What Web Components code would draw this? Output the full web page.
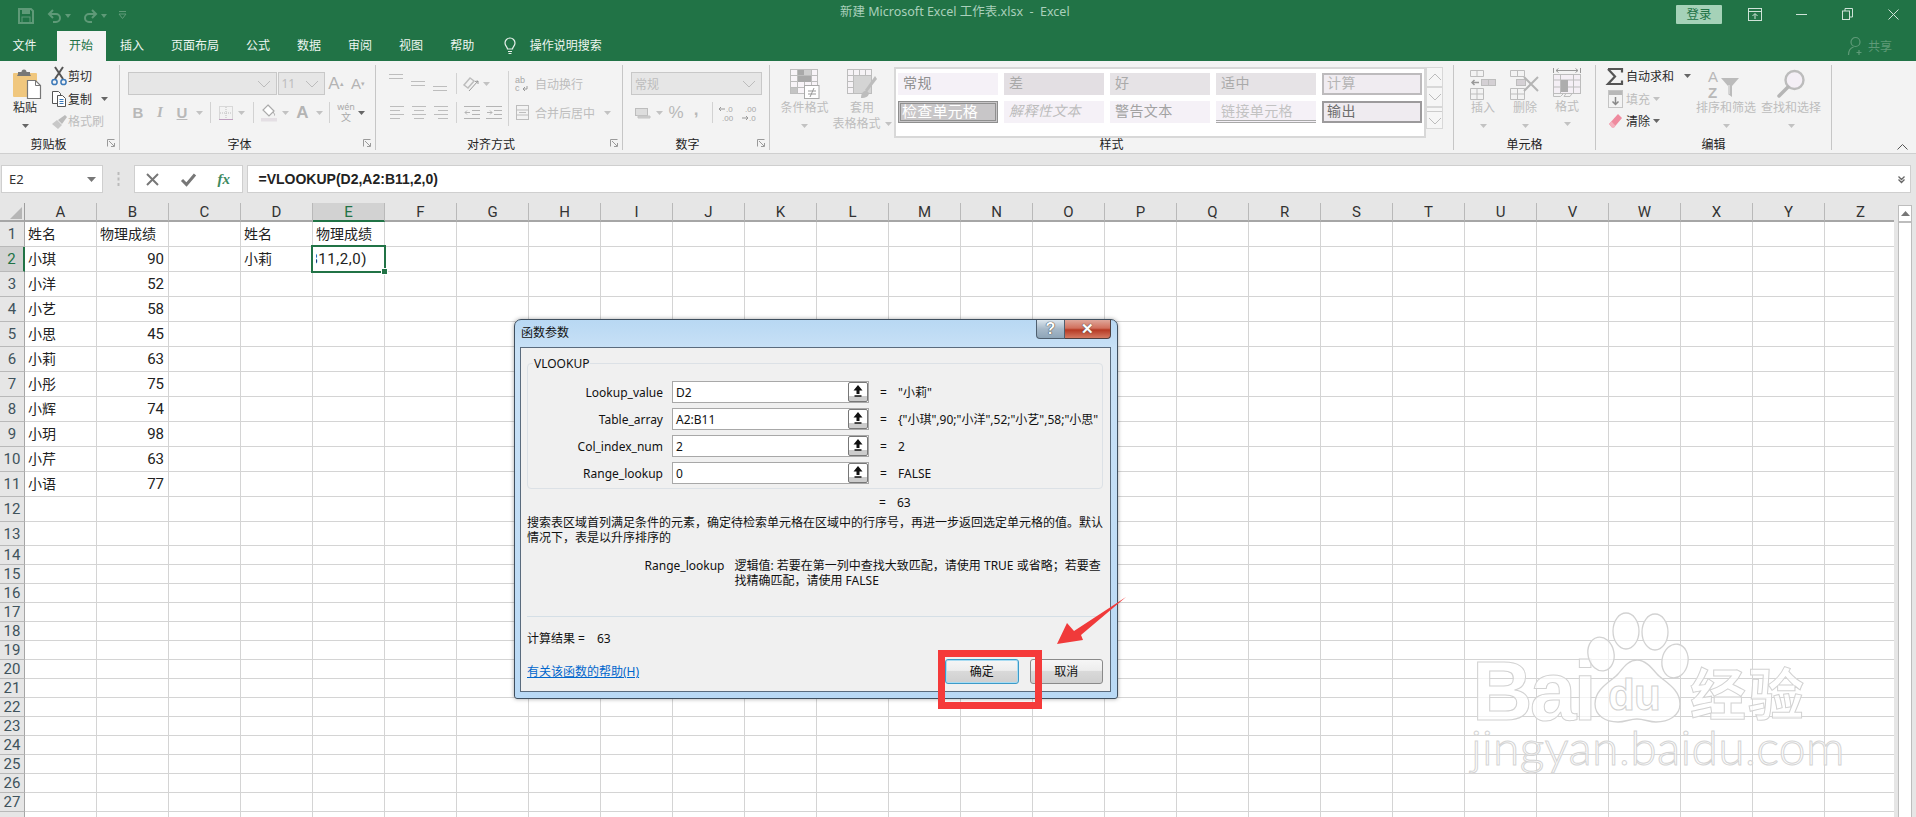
<!DOCTYPE html>
<html lang="zh"><head><meta charset="utf-8"><title>Excel</title>
<style>html,body{margin:0;padding:0;background:#fff;overflow:hidden}</style></head>
<body><xl-app></xl-app>
<script>
const CJK='"Noto Sans CJK SC"';
const UI=`"Noto Sans",${CJK},sans-serif`;
const g='#bdbdbd', d='#6e6e6e', dim='#5f9a78';
const S=(w,h,b,a='')=>`<svg xmlns="http://www.w3.org/2000/svg" width="${w}" height="${h}" viewBox="0 0 ${w} ${h}" fill="none" stroke="${g}" ${a}>${b}</svg>`;
const lines=(arr,x1,x2)=>arr.map(y=>`<path d="M${x1} ${y}H${x2}"/>`).join('');
const ICON={
 paste:S(30,31,`<rect x="1" y="4" width="24" height="24" rx="1" fill="#f0c77e" stroke="none"/><path d="M6 5V3h3.5a2.5 2.5 0 0 1 5 0H18v2l1 2H5z" fill="#777" stroke="none"/><path d="M15.500 11.500h8l5 5v13h-13z" fill="#fff" stroke="#777" stroke-width="1.200"/><path d="M23.500 11.500v5h5" stroke="#777"/>`),
 scissors:S(16,20,`<path d="M4 1l8 12M12 1L4 13" stroke="#555" stroke-width="2"/><circle cx="3.500" cy="16" r="2.600" stroke="#3b78b8" stroke-width="1.500"/><circle cx="12.500" cy="16" r="2.600" stroke="#3b78b8" stroke-width="1.500"/>`),
 copy:S(16,17,`<path d="M1.500 1.500h6l2 2v10h-8z" fill="#fff" stroke="#555"/><path d="M6.500 5.500h5l3 3v8h-8z" fill="#fff" stroke="#555"/><path d="M8.500 9.500h4M8.500 11.500h4M8.500 13.500h4" stroke="#3b78b8"/>`),
 brush:S(17,15,`<path d="M1 10l5-4 5 5-4 4z" fill="#c8c8c8" stroke="none"/><path d="M7 6l7-5 2 2-5 7z" fill="#bbb" stroke="none"/>`),
 caret:S(7,4,`<path d="M0 0h7L3.500 4z" fill="#c2c2c2" stroke="none"/>`),
 dcaret:S(7,4,`<path d="M0 0h7L3.500 4z" fill="#666" stroke="none"/>`),
 chev:S(14,8,`<path d="M1 1l6 6 6-6" stroke="#bcbcbc"/>`),
 alT:S(16,9,lines([.5,4.5],1,15)),
 alL:S(15,13,`<path d="M1 .5H15M1 4.500H11M1 8.500H15M1 12.500H11"/>`),
 alC:S(15,13,`<path d="M1 .5H15M3 4.500H13M1 8.500H15M3 12.500H13"/>`),
 alR:S(15,13,`<path d="M1 .5H15M5 4.500H15M1 8.500H15M5 12.500H15"/>`),
 orient:S(18,18,`<path d="M2 10l6-7 4 3-6 7z" stroke-width="1.500"/><path d="M7 16L16 6" stroke="#999"/><path d="M16 6l-3 .5M16 6v3" stroke="#999"/>`),
 wrap:S(14,16,`<text x="0" y="7" font-family="Liberation Sans" font-size="9" fill="#a8a8a8" stroke="none">ab</text><text x="0" y="15" font-family="Liberation Sans" font-size="9" fill="#a8a8a8" stroke="none">c</text><path d="M12 10v3H8m2-2l-2 2 2 2" stroke="#999"/>`),
 merge:S(13,15,`<rect x=".5" y=".5" width="12" height="14"/><path d="M.5 5H12.500M.5 10H12.500M3 7.500h7"/>`),
 out:S(17,13,`<path d="M1 .5H17M9 4.500H17M9 8.500H17M1 12.500H17M7 6.500H2m2-2l-2 2 2 2" stroke="#b4b4b4"/>`),
 ind:S(17,13,`<path d="M1 .5H17M9 4.500H17M9 8.500H17M1 12.500H17M2 6.500h5m-2-2l2 2-2 2" stroke="#b4b4b4"/>`),
 bord:S(14,14,`<rect x=".5" y=".5" width="13" height="13" stroke-dasharray="1 1"/><path d="M7 1v12M1 7h12" stroke-dasharray="1 1"/><path d="M0 13.500h14" stroke="#c0a0c0"/>`),
 fill:S(16,18,`<path d="M7 1l6 6-5 5-6-6z" fill="#fff" stroke="#aaa" stroke-width="1.200"/><path d="M12 8c1 1.500 2 2.500 1.500 3.500" stroke="#aaa"/><rect x="0" y="14" width="16" height="3.500" fill="#e4dfe4" stroke="none"/>`),
 cur:S(16,15,`<rect x=".5" y="3.500" width="12" height="7" fill="#ddd"/><path d="M3 10v3h12v-2H3z" fill="#cfcfcf" stroke="#c4c4c4"/>`),
 incd:S(18,18,`<text x="8" y="8" font-family="Liberation Sans" font-size="8" fill="#a8a8a8" stroke="none">.0</text><text x="4" y="17" font-family="Liberation Sans" font-size="8" fill="#a8a8a8" stroke="none">.00</text><path d="M7 5H1m2-2L1 5l2 2" stroke="#999"/>`),
 decd:S(18,18,`<text x="5" y="8" font-family="Liberation Sans" font-size="8" fill="#a8a8a8" stroke="none">.00</text><text x="9" y="17" font-family="Liberation Sans" font-size="8" fill="#a8a8a8" stroke="none">.0</text><path d="M2 14h6m-2-2l2 2-2 2" stroke="#999"/>`),
 cond:S(30,30,`<rect x=".5" y=".5" width="27" height="24" fill="#f8f4f8"/><path d="M7.500 .5v24M14.500 .5v24M21.500 .5v24M.5 6.500h27M.5 12.500h27M.5 18.500h27"/><rect x="8" y="1" width="6" height="5" fill="#a9a9a9" stroke="none"/><rect x="8" y="7" width="13" height="6" fill="#a9a9a9" stroke="none"/><rect x="1" y="19" width="6" height="5" fill="#c4c4c4" stroke="none"/><rect x="14" y="1" width="7" height="5" fill="#cfcfcf" stroke="none"/><rect x="14.500" y="16.500" width="14.500" height="13" fill="#fff" stroke="#aaa"/><path d="M18 22h8M18 25h8M24 19l-4 9" stroke="#999"/>`),
 table:S(30,30,`<rect x=".5" y=".5" width="24" height="24" fill="#f6f3f6"/><path d="M6.500 .5v24M12.500 .5v24M18.500 .5v24M.5 6.500h24M.5 12.500h24M.5 18.500h24"/><rect x="7" y="7" width="17" height="17" fill="#d4d4d4" stroke="none"/><path d="M28 7L18 21l2 2L30 10z" fill="#bdbdbd" stroke="none"/><path d="M14 29c0-5 3-8 6-7l2 2c0 3-3 5-8 5z" fill="#bdbdbd" stroke="none"/>`),
 ins:S(26,30,`<path d="M.5 1.500h13v6H.5zM7 1.500v6M.5 19.500h13v11H.5zM7 19.500v11M.5 25h13"/><rect x="11.500" y="10.500" width="14" height="6" fill="#d4d0d4"/><path d="M18.500 10.500v6" /><path d="M9 13.500H2m2.500-2.500L2 13.500 4.500 16" stroke="#9a9a9a" stroke-width="1.500"/>`),
 del:S(30,30,`<path d="M.5 1.500h14v6H.5zM7.500 1.500v6M.5 19.500h14v11H.5zM7.500 19.500v11M.5 25h14"/><rect x="6.500" y="10.500" width="9" height="6" fill="#d4d0d4"/><path d="M14 8l14 14M28 8L14 22" stroke="#b4b4b4" stroke-width="2"/>`),
 fmt:S(28,32,`<path d="M.5 1v5M27.500 1v5M3 3.500h22M3 3.500l2.500-2M3 3.500l2.500 2M25 3.500l-2.500-2M25 3.500l-2.500 2" stroke="#999"/><rect x=".5" y="7.500" width="27" height="19" fill="#f4eff5"/><path d="M7.500 7.500v19M20.500 7.500v19M.5 13h27M.5 20h27"/><rect x="8" y="13" width="7" height="12" fill="#adadad" stroke="none"/><path d="M.5 26.500v3h7l3-3M13 26.500l-2 3h6l2-3"/>`),
 sum:S(17,17,`<path d="M1 1h14v3.500M1 1l7 7.500L1 16h14v-3.500" stroke="#555" stroke-width="2.200"/>`),
 fillb:S(15,18,`<rect x=".5" y=".5" width="14" height="17" fill="#f3f3f3" stroke="#c4c4c4"/><rect x="1" y="1" width="13" height="4" fill="#b8b8b8" stroke="none"/><path d="M7.500 7v7M4.500 11.500l3 3 3-3" stroke="#888" stroke-width="1.500"/>`),
 eraser:S(15,16,`<path d="M10 1l4 4-8 9.500H4L1 11z" fill="#ef8a9e" stroke="none"/><path d="M1 11l3 3.500h2l1.500-1.800L3.500 8.500z" fill="#f4b0bd" stroke="none"/>`),
 sort:S(36,30,`<text x="0" y="13" font-family="Liberation Sans" font-size="15" fill="#b8b8b8" stroke="none">A</text><text x="0" y="29" font-family="Liberation Sans" font-weight="bold" font-size="15" fill="#b8b8b8" stroke="none">Z</text><path d="M13 9h18l-7 8v11l-4-3v-8z" fill="#bbb" stroke="none"/><path d="M21 16v9" stroke="#eee"/>`),
 find:S(30,30,`<circle cx="18.500" cy="11" r="9" fill="#f4eff6" stroke="#bcbcbc" stroke-width="2.400"/><path d="M12 18L3 27" stroke="#b5b5b5" stroke-width="3.500" stroke-linecap="round"/>`),
 launch:S(8,8,`<path d="M.5 7.500V.5h7M2 2l5 5M4 7.500h3.500V4" stroke="#9a9a9a"/>`),
 up:S(11,6,`<path d="M.5 5.500l5-5 5 5" stroke="#555"/>`),
 save:S(16,16,`<path d="M1 1h12l2 2v12H1z" stroke="${dim}" stroke-width="2"/><rect x="4" y="1" width="8" height="5" fill="${dim}" stroke="none"/><rect x="4" y="9" width="8" height="6" stroke="${dim}"/>`),
 undo:S(15,15,`<path d="M3 6h6a4 4 0 0 1 0 8H6" stroke="${dim}" stroke-width="2"/><path d="M6 2L2 6l4 4" stroke="${dim}" stroke-width="2"/>`),
 redo:S(15,15,`<path d="M12 6H6a4 4 0 0 0 0 8h3" stroke="${dim}" stroke-width="2"/><path d="M9 2l4 4-4 4" stroke="${dim}" stroke-width="2"/>`),
 dimc:S(6,4,`<path d="M0 0h6L3 4z" fill="${dim}" stroke="none"/>`),
 custom:S(9,9,`<path d="M1 .5h7M1 3h7L4.500 7.500z" stroke="${dim}"/>`),
 bulb:S(12,18,`<path d="M3.500 12c0-2-2.500-3-2.500-6a5 5 0 0 1 10 0c0 3-2.500 4-2.500 6z" stroke="#e8f1ec" stroke-width="1.200"/><path d="M4 14.500h4M4.500 16.500h3" stroke="#e8f1ec" stroke-width="1.200"/>`),
 mode:S(14,13,`<rect x=".5" y=".5" width="13" height="12" stroke="#cfe3d8"/><path d="M.5 3.500h13M7 11V6M4.500 8L7 5.500 9.500 8" stroke="#cfe3d8"/>`),
 minw:S(11,1,`<path d="M0 .5h11" stroke="#cfe3d8"/>`),
 rest:S(11,12,`<rect x=".5" y="3" width="7" height="8.500" stroke="#cfe3d8"/><path d="M3 3V.5h7.500v8.500H8" stroke="#cfe3d8"/>`),
 closew:S(11,11,`<path d="M.5 .5l10 10M10.500 .5l-10 10" stroke="#cfe3d8"/>`),
 person:S(16,20,`<circle cx="7.500" cy="6" r="4.500" stroke="#5f9a78" stroke-width="1.200"/><path d="M.5 19c0-4 2-7 5-8M11 14v5M8.500 16.500h5" stroke="#5f9a78" stroke-width="1.200"/>`),
 x:S(13,13,`<path d="M1 1l11 11M12 1L1 12" stroke="#777" stroke-width="2"/>`),
 check:S(15,13,`<path d="M1 7l4.500 4.500L14 1.500" stroke="#777" stroke-width="3"/>`),
 dots:S(3,14,`<path d="M1.500 0v3M1.500 5.500v3M1.500 11v3" stroke="#bbb" stroke-width="2"/>`),
 name:S(9,5,`<path d="M0 0h9L4.500 5z" fill="#777" stroke="none"/>`),
 more:S(7,7,`<path d="M.5 .5L3.500 3.500 6.500 .5M.5 3.500L3.500 6.500 6.500 3.500" stroke="#666" stroke-width="1.300"/>`),
 corner:S(12,12,`<path d="M0 12L12 0v12z" fill="#b6b6b6" stroke="none"/>`),
 sup:S(12,13,`<path d="M6 1L1.500 6.500h3V10h3V6.500h3z" fill="#111" stroke="none"/><path d="M2.500 12h7" stroke="#111" stroke-width="1.500"/>`),
 sca:S(9,5,`<path d="M0 5l4.500-5L9 5z" fill="#777" stroke="none"/>`),
 paw:S(90,112,`<g stroke="#d2d2d2" stroke-width="1.300" fill="rgba(255,255,255,.65)"><ellipse cx="8" cy="42" rx="13" ry="17" transform="rotate(-12 8 42)"/><ellipse cx="33" cy="19" rx="13" ry="18"/><ellipse cx="62" cy="20" rx="13" ry="18"/><ellipse cx="82" cy="49" rx="13" ry="17" transform="rotate(10 82 49)"/><path d="M44 48c8 0 14 7 20 14 6 7 23 14 23 30 0 12-12 18-24 18-7 0-12-3-19-3s-12 3-19 3c-12 0-23-6-23-18 0-16 17-23 23-30 6-7 11-14 19-14z"/></g>`,'style="overflow:visible"'),
};
function define(n,css,html,extra){
  const t=document.createElement('template');t.innerHTML=`<style>${css}</style>${html}`;
  customElements.define(n,class extends HTMLElement{constructor(){super();this.attachShadow({mode:'open'}).appendChild(t.content.cloneNode(true));extra&&extra.call(this)}});
}
customElements.define('xl-icon',class extends HTMLElement{connectedCallback(){if(this.shadowRoot)return;this.attachShadow({mode:'open'}).innerHTML=`<style>:host{display:inline-flex;flex:none;line-height:0}svg{overflow:visible;display:block}</style>${ICON[this.getAttribute('n')]||''}`}});
const I=(n,st='')=>`<xl-icon n="${n}" style="${st}"></xl-icon>`;

define('xl-group',`:host{display:flex;flex-direction:column;flex:none;height:85px;border-right:1px solid #c6c6c6;box-sizing:border-box;position:relative}
.c{flex:1;min-height:0;display:flex}.l{height:12px;line-height:12px;text-align:center;font-size:12px;color:#222;transform:translateY(1px)}
.k{position:absolute;right:4px;bottom:-1px}`,`<div class="c"><slot></slot></div><div class="l"></div><div class="k"></div>`);
define('xl-big',`:host{display:flex;flex-direction:column;align-items:center;flex:none;padding-top:4px;box-sizing:border-box;font-size:12px;color:#bdbdbd}
.i{height:31px;display:flex;align-items:flex-start;justify-content:center}.a,.b{height:15.500px;line-height:15.500px;white-space:nowrap;display:flex;align-items:center;gap:4px}`,`<div class="i"><slot name="i"></slot></div><div class="a"><slot name="a"></slot></div><div class="b"><slot name="b"></slot></div>`);

define('xl-title',`:host{display:flex;align-items:center;height:31px;background:#217346;position:relative;font-family:${UI};font-size:12px;flex:none}
.q{display:flex;align-items:center;padding-left:18px;width:150px;box-sizing:border-box}
.t{position:absolute;left:840px;top:4px;height:16px;line-height:16px;color:#a9d0bb;white-space:pre;font-size:12.500px}
.r{margin-left:auto;display:flex;align-items:center;height:22px;align-self:flex-start;margin-top:3px}
.lg{width:46px;height:19px;line-height:19px;border-radius:1px;background:#a5d2b8;color:#217346;text-align:center;font-size:12.500px;margin-right:10px}
.w{width:46px;display:flex;justify-content:center}`,
`<div class="q">${I('save')}<span style="width:13px"></span>${I('undo')}<span style="width:3px"></span>${I('dimc')}<span style="width:12px"></span>${I('redo')}<span style="width:3px"></span>${I('dimc')}<span style="width:11px"></span>${I('custom')}</div>
<div class="t">新建 Microsoft Excel 工作表.xlsx  -  Excel</div>
<div class="r"><div class="lg">登录</div><div class="w">${I('mode')}</div><div class="w">${I('minw')}</div><div class="w">${I('rest')}</div><div class="w">${I('closew')}</div></div>`);

define('xl-tabs',`:host{display:flex;align-items:stretch;height:30px;background:#217346;font-family:${UI};font-size:12px;color:#eef6f1;flex:none}
span{padding:0 12.500px;line-height:29px;white-space:nowrap}.on{background:#f3f3f3;color:#217346}
.gap{display:flex;gap:2px;margin-left:7.500px}.bulb{display:flex;align-items:center;margin:0 0 0 17px}.s{padding:0 0 0 14px;font-size:12px}
.sh{margin-left:auto;display:flex;align-items:center;color:#5f9a78;padding-right:24px}.sh b{font-weight:400;margin-left:4px}`,
`<span>文件</span><div class="gap"><span class="on">开始</span><span>插入</span><span>页面布局</span><span>公式</span><span>数据</span><span>审阅</span><span>视图</span><span>帮助</span></div><div class="bulb">${I('bulb')}</div><span class="s">操作说明搜索</span><div class="sh">${I('person')}<b>共享</b></div>`);

define('xl-gallery',`:host{display:grid;grid-template-columns:repeat(5,100px);grid-template-rows:22px 22px;gap:6px;padding:4px 2px;border:2px solid #d8d8d8;background:#fff;width:524px;flex:none;font-size:14px;letter-spacing:.4px}
div{padding-left:5px;line-height:20px;box-sizing:border-box;white-space:nowrap;color:#a9a9a9;overflow:hidden}
.n{background:#f5f1f7;color:#8f8f8f}.m{background:#e3dfe3;color:#a9a9a9}.h{background:#e6e3e6;color:#aaa}
.c{background:#f0ecf1;border:2px solid #bdbbbd;line-height:16px;padding-left:3px;color:#b5b5b5}
.k{background:#c8c6c8;outline:1px solid #8f8f8f;outline-offset:-3px;border:1px solid #8f8f8f;color:#fff;font-size:15px;letter-spacing:.2px;padding-left:3px;line-height:19px}
.e{background:#f5f1f7;font-style:italic;color:#bcbcbc}.w{background:#f5f1f7;color:#a2a2a2}
.l{background:#f5f1f7;color:#c2c2c2;border-bottom:3px double #a9a9a9}
.o{background:#efebf0;border:2px solid #9c9a9c;color:#6d6d6d;line-height:16px;padding-left:3px}`,
`<div class="n">常规</div><div class="m">差</div><div class="h">好</div><div class="h">适中</div><div class="c">计算</div><div class="k">检查单元格</div><div class="e">解释性文本</div><div class="w">警告文本</div><div class="l">链接单元格</div><div class="o">输出</div>`);

define('xl-ribbon',`:host{display:flex;height:93px;box-sizing:border-box;padding-top:4px;background:#f3f3f3;border-bottom:1px solid #cfcfcf;font-family:${UI};font-size:12px;flex:none}
.col{display:flex;flex-direction:column}.r{display:flex;align-items:center;height:23px}.h{height:22.500px}
.it{display:flex;align-items:center;justify-content:center;flex:none;height:100%}
.t{white-space:nowrap}.dk{color:#2b2b2b}.gr{color:#bdbdbd}
.sep{width:1px;height:21px;background:#d2d2d2;flex:none}
.combo{height:23px;box-sizing:border-box;background:#e6e6e6;border:1.500px solid #c8c8c8;display:flex;align-items:center;justify-content:flex-end;padding-right:5px;flex:none;color:#bdbdbd}
.bf{font-family:"Liberation Sans";font-weight:700;color:#b8b8b8;font-size:15px}.A{font-family:"Liberation Sans";color:#b4b4b4;font-size:17px}
.scroll{display:flex;flex-direction:column;width:17px;height:62px;flex:none}.scroll div{flex:1;border:1px solid #d8d8d8;display:flex;align-items:center;justify-content:center;box-sizing:border-box;background:#f6f6f6}
.end{flex:1;display:flex;align-items:flex-end;justify-content:flex-end;padding:0 8px 3px 0}
.wen{width:24px;flex-direction:column;color:#aaa;font-size:9px;line-height:10px}.wen span:last-child{font-size:10px;line-height:11px}`,
`<xl-group style="width:120px" data-l="剪贴板" data-p="22">
  <xl-big style="width:50px"><span slot="i" style="margin-left:4px">${I('paste')}</span><span slot="a" class="dk">粘贴</span><span slot="b">${I('dcaret')}</span></xl-big>
  <div class="col"><div class="r h"><span class="it" style="width:18px">${I('scissors')}</span><span class="t dk">剪切</span></div>
  <div class="r h"><span class="it" style="width:18px">${I('copy')}</span><span class="t dk">复制</span><span style="width:9px"></span>${I('dcaret')}</div>
  <div class="r h"><span class="it" style="width:18px">${I('brush')}</span><span class="t gr">格式刷</span></div></div>
</xl-group>
<xl-group style="width:256px" data-l="字体" data-p="16">
 <div class="col" style="padding:7px 0 0 8px"><div class="r"><div class="combo" style="width:148.500px">${I('chev')}</div><div class="combo" style="width:47.500px;margin-left:1px;justify-content:space-between;padding-left:3px">11${I('chev')}</div>
   <span class="it A" style="width:22px">A<sup style="font-size:7px">▴</sup></span><span class="it A" style="width:22px;font-size:15px">A<sup style="font-size:7px">▾</sup></span></div>
  <div class="r" style="margin:6px 0 0 -1px"><span class="it bf" style="width:22px">B</span><span class="it bf" style="width:22px;font-style:italic;font-family:'Liberation Serif'">I</span><span class="it bf" style="width:22px;text-decoration:underline">U</span><span class="it" style="width:12px">${I('caret')}</span><span class="it" style="width:11px"><i class="sep"></i></span><span class="it" style="width:19px">${I('bord')}</span><span class="it" style="width:13px">${I('caret')}</span><span class="it" style="width:10px"><i class="sep"></i></span><span class="it" style="width:22px">${I('fill')}</span><span class="it" style="width:11px">${I('caret')}</span><span class="it A" style="width:23px;font-weight:700">A</span><span class="it" style="width:10px">${I('caret')}</span><span class="it" style="width:10px"><i class="sep"></i></span><span class="it wen"><span>wén</span><span>文</span></span><span class="it" style="width:6px">${I('dcaret')}</span></div></div>
</xl-group>
<xl-group style="width:247px" data-l="对齐方式" data-p="16">
 <div class="col" style="padding:7px 0 0 9px;width:120px"><div class="r"><span class="it" style="width:22px;align-items:flex-start;padding-top:2px;box-sizing:border-box">${I('alT')}</span><span class="it" style="width:22px;padding-top:3px;box-sizing:border-box">${I('alT')}</span><span class="it" style="width:22px;align-items:flex-end;box-sizing:border-box">${I('alT')}</span><span class="it" style="width:10px"><i class="sep"></i></span><span class="it" style="width:20px">${I('orient')}</span><span class="it" style="width:10px">${I('caret')}</span></div>
  <div class="r" style="margin-top:6px"><span class="it" style="width:22px">${I('alL')}</span><span class="it" style="width:22px">${I('alC')}</span><span class="it" style="width:22px">${I('alR')}</span><span class="it" style="width:10px"><i class="sep"></i></span><span class="it" style="width:21px">${I('out')}</span><span class="it" style="width:23px">${I('ind')}</span></div></div>
 <i class="sep" style="height:55px;margin:6px 0 0 3px"></i>
 <div class="col" style="padding-top:7px"><div class="r"><span class="it" style="width:26px">${I('wrap')}</span><span class="t gr">自动换行</span></div>
  <div class="r" style="margin-top:6px"><span class="it" style="width:26px">${I('merge')}</span><span class="t gr">合并后居中</span><span style="width:9px"></span>${I('caret')}</div></div>
</xl-group>
<xl-group style="width:147px" data-l="数字" data-p="17">
 <div class="col" style="padding:7px 0 0 8px"><div class="r"><div class="combo" style="width:130.500px;justify-content:space-between;padding-left:3px">常规${I('chev')}</div></div>
 <div class="r" style="margin-top:6px"><span class="it" style="width:23px">${I('cur')}</span><span class="it" style="width:11px">${I('caret')}</span><span class="it bf" style="width:22px;font-weight:400;font-size:17px">%</span><span class="it bf" style="width:18px;font-size:17px;padding-bottom:6px;box-sizing:border-box">,</span><span class="it" style="width:15px"><i class="sep"></i></span><span class="it" style="width:14px">${I('incd')}</span><span class="it" style="width:30px">${I('decd')}</span></div></div>
</xl-group>
<xl-group style="width:684px" data-l="样式">
 <xl-big style="width:55px;margin-left:7px"><span slot="i">${I('cond')}</span><span slot="a">条件格式</span><span slot="b">${I('caret')}</span></xl-big>
 <xl-big style="width:60px"><span slot="i">${I('table')}</span><span slot="a">套用</span><span slot="b">表格格式${I('caret','margin:0 0 0 4px;vertical-align:middle')}</span></xl-big>
 <xl-gallery style="margin:2px 0 0 2px"></xl-gallery>
 <div class="scroll" style="margin-top:2px"><div style="flex:0 0 20px">${I('chev','transform:scaleY(-1)')}</div><div style="flex:0 0 20px">${I('chev')}</div><div style="flex:0 0 22px;flex-direction:column;gap:5px"><i style="width:15px;height:1px;background:#ccc"></i>${I('chev')}</div></div>
</xl-group>
<xl-group style="width:142px" data-l="单元格">
 <xl-big style="width:42px;margin-left:8px"><span slot="i">${I('ins')}</span><span slot="a">插入</span><span slot="b">${I('caret')}</span></xl-big>
 <xl-big style="width:42px"><span slot="i">${I('del')}</span><span slot="a">删除</span><span slot="b">${I('caret')}</span></xl-big>
 <xl-big style="width:42px;padding-top:2px"><span slot="i">${I('fmt')}</span><span slot="a" style="padding-top:2px;display:block">格式</span><span slot="b">${I('caret')}</span></xl-big>
</xl-group>
<xl-group style="width:236px" data-l="编辑">
 <div class="col" style="width:87px;margin-left:10px"><div class="r h"><span class="it" style="width:18px">${I('sum')}</span><span class="t dk" style="margin-left:2px">自动求和</span><span style="width:10px"></span>${I('dcaret')}</div>
 <div class="r h"><span class="it" style="width:18px">${I('fillb')}</span><span class="t gr" style="margin-left:2px">填充</span><span style="width:3px"></span>${I('caret')}</div>
 <div class="r h"><span class="it" style="width:18px">${I('eraser')}</span><span class="t dk" style="margin-left:2px">清除</span><span style="width:3px"></span>${I('dcaret')}</div></div>
 <xl-big style="width:66px"><span slot="i">${I('sort')}</span><span slot="a">排序和筛选</span><span slot="b">${I('caret')}</span></xl-big>
 <xl-big style="width:64px"><span slot="i">${I('find')}</span><span slot="a">查找和选择</span><span slot="b">${I('caret')}</span></xl-big>
</xl-group>
<div class="end">${I('up')}</div>`,function(){
 this.shadowRoot.querySelectorAll('xl-group').forEach(e=>{const s=e.shadowRoot,l=s.querySelector('.l');l.textContent=e.dataset.l;
  if(e.dataset.p){l.style.paddingRight=e.dataset.p+'px';s.querySelector('.k').innerHTML=I('launch');}});
});

define('xl-formula',`:host{display:flex;height:49px;box-sizing:border-box;padding:11px 5px 10px 1px;background:#e6e6e6;font-family:"Noto Sans",sans-serif;flex:none}
.b{background:#fff;border:1px solid #cfcfcf;box-sizing:border-box;display:flex;align-items:center;flex:none;height:28px}
.n{width:101.500px;padding:0 6px 0 7px;justify-content:space-between;font-size:13px;color:#333}
.dt{width:31px;display:flex;align-items:center;justify-content:center;flex:none}
.f{width:109px}.f span{display:flex;justify-content:center;width:36px}
.fx{font:italic 700 15px "Liberation Serif";color:#3e8a5f}
.v{flex:1;margin-left:4px;padding:0 5px 0 11px;justify-content:space-between;font-weight:700;font-size:14px;color:#222;font-family:"Liberation Sans"}`,
`<div class="b n">E2${I('name')}</div><div class="dt">${I('dots')}</div><div class="b f"><span>${I('x')}</span><span>${I('check')}</span><span class="fx">fx</span></div><div class="b v"><span>=VLOOKUP(D2,A2:B11,2,0)</span>${I('more')}</div>`);

define('xl-sheet',`:host{display:flex;flex:1;min-height:0;background:#e6e6e6;position:relative;overflow:hidden;font-family:Roboto,${CJK},sans-serif;font-size:15px;color:#222}
.g{width:1894px;flex:none;overflow:hidden;display:grid;grid-template-columns:25px repeat(26,72px);grid-auto-rows:min-content;background:#fff;align-content:start}
.g>div{box-sizing:border-box;border-right:1px solid #d4d4d4;border-bottom:1px solid #d4d4d4;white-space:nowrap;overflow:hidden;padding:0 4px;display:flex;align-items:center}
.g>.cj{font-size:14px;padding:0 0 2px 3px}.g>.nm{justify-content:flex-end;padding-bottom:1px}
.g>.ch{height:19px;background:#e6e6e6;border-right:1px solid #b9b9b9;border-bottom:2px solid #a6a6a6;justify-content:center;color:#333;font-size:15px;padding:0}
.g>.ch.s{background:#d2d2d2;border-bottom:2px solid #217346;color:#217346}
.g>.rh{background:#e6e6e6;border-right:1px solid #a6a6a6;border-bottom:1px solid #b9b9b9;justify-content:center;padding:0;color:#40535c;font-size:15px}
.g>.rh.s{background:#d2d2d2;border-right:2px solid #217346;color:#217346}
.g>.ed{justify-content:flex-end;padding:0 17px 1px 0;letter-spacing:.55px;clip-path:inset(0 0 0 3px)}
.g>.cn{align-items:flex-end;justify-content:flex-end;padding:0 2px 1px 0}
.sel{position:absolute;left:311px;top:42px;width:75px;height:28px;box-sizing:border-box;border:2px solid #217346;pointer-events:none}
.sel i{position:absolute;right:-4px;bottom:-4px;width:5px;height:5px;background:#217346;border:1px solid #fff}
.sb{flex:1;padding:2px 4px 0 4px}.tr{height:100%;box-sizing:border-box;border:1px solid #bdbdbd;background:#fff;border-width:0 1.500px}
.ar{height:15px;border:1.500px solid #bdbdbd;border-width:1.500px 0 2.500px;display:flex;align-items:center;justify-content:center;background:#fff}`,
`<div class="g"></div><div class="sel"><i></i></div><div class="sb"><div class="tr"><div class="ar">${I('sca')}</div></div></div>`,function(){
 const G=this.shadowRoot.querySelector('.g');let h='<div class="ch cn" style="border-right-color:#9e9e9e">'+I('corner')+'</div>';
 const L='ABCDEFGHIJKLMNOPQRSTUVWXYZ';for(const c of L)h+=`<div class="ch${c=='E'?' s':''}">${c}</div>`;
 const D={1:{A:'姓名',B:'物理成绩',D:'姓名',E:'物理成绩'},2:{D:'小莉'}};
 const names=['小琪','小洋','小艺','小思','小莉','小彤','小辉','小玥','小芹','小语'],sc=[90,52,58,45,63,75,74,98,63,77];
 names.forEach((n,i)=>{D[i+2]=Object.assign(D[i+2]||{},{A:n,B:sc[i]})});
 for(let r=1;r<=28;r++){const H=r<=12?25:r==13?24:19;
  h+=`<div class="rh${r==2?' s':''}" style="height:${H}px">${r<28?r:''}</div>`;
  for(const c of L){let v=(D[r]||{})[c],k='';
   if(r==2&&c=='E'){h+=`<div class="ed" style="height:${H}px">B11,2,0)</div>`;continue}
   if(typeof v=='number')k='nm';else if(v)k='cj';
   h+=`<div class="${k}" style="height:${H}px">${v==null?'':v}</div>`}}
 G.innerHTML=h;
});

define('xl-param',`:host{display:flex;align-items:center;height:22px;margin-bottom:5px}
.l{width:135px;text-align:right;flex:none}.i{width:197px;height:22px;box-sizing:border-box;margin-left:9px;border:1px solid #a8a8a8;background:#fff;display:flex;align-items:center;justify-content:space-between;padding-left:3px;flex:none}
.u{width:20px;height:20px;box-sizing:border-box;border:1px solid #777;border-radius:2px;background:linear-gradient(#fff 72%,#ccc 72%);display:flex;align-items:center;justify-content:center;padding-bottom:3px}
.e{margin-left:11px;width:18px;flex:none}.v{white-space:nowrap}`,
`<div class="l"><slot name="l"></slot></div><div class="i"><span><slot name="i"></slot></span><div class="u">${I('sup')}</div></div><div class="e">=</div><div class="v"><slot name="v"></slot></div>`);

define('xl-btn',`:host{display:flex;align-items:center;justify-content:center;width:73.500px;height:25px;box-sizing:border-box;border:1px solid #8a8a8a;border-radius:3px;background:linear-gradient(#f6f6f6 0,#ededed 45%,#d9d9d9 50%,#cfcfcf 100%);flex:none;font-size:12px;color:#111}
:host([def]){border-color:#3c9bc9;box-shadow:inset 0 0 0 1px #a9dcf2}`,`<slot></slot>`);

define('xl-dialog',`:host{position:absolute;left:514px;top:319px;width:604px;height:380px;box-sizing:border-box;border:1px solid #3f4f5f;border-radius:7px 7px 3px 3px;background:linear-gradient(#b8d8f3 0,#c9e1f6 8%,#b9d9f5 100%);padding:0 6px 6px 5px;display:flex;flex-direction:column;font-family:"Noto Sans",${CJK},sans-serif;font-size:12px;color:#111;box-shadow:0 0 4px rgba(0,0,0,.35)}
.tb{height:27px;display:flex;align-items:flex-start;flex:none}.tt{margin:5px 0 0 1px;line-height:16px}
.bx{margin-left:auto;display:flex;height:19px}
.hp{width:29px;background:linear-gradient(#dce6ee,#a6b8c8 50%,#8ea5b8);border:1px solid #4f5f6f;border-top:0;border-radius:0 0 0 4px;color:#fff;text-align:center;font:700 16px/18px "Liberation Sans";text-shadow:0 0 1px #333,0 0 1px #333;box-sizing:border-box}
.cl{width:46px;background:linear-gradient(#dfa79b,#d1705d 45%,#b63a24 55%,#d47a62);border:1px solid #4f3f3f;border-left:0;border-top:0;border-radius:0 0 4px 0;color:#fff;text-align:center;font:700 15px/18px "Liberation Sans";text-shadow:0 0 1px #555,0 0 1px #555;box-sizing:border-box}
.c{flex:1;border:1px solid #5a6b7d;background:#f0f0f0;padding:0 7px 0 6px;display:flex;flex-direction:column}
.gb{margin-top:15px;height:126px;box-sizing:border-box;border:1px solid #dce1e6;border-radius:4px;flex:none}
.lg{display:inline-block;height:14px;line-height:14px;margin:-7px 0 7px 5px;background:#f0f0f0;padding:0 1px;vertical-align:top}
.ln{height:15px;line-height:15px;white-space:nowrap}
.rg{display:flex;margin-top:12.500px}.rg .a{width:197.500px;text-align:right;margin-right:10px;flex:none}
.hr{height:1px;background:#d5dfe6;margin-top:28px;flex:none}
.bt{display:flex;align-items:center;margin-top:13px}.bt a{color:#0066cc;text-decoration:underline;margin-right:auto}`,
`<div class="tb"><div class="tt">函数参数</div><div class="bx"><div class="hp">?</div><div class="cl">✕</div></div></div>
<div class="c"><div class="gb"><div class="lg">VLOOKUP</div>
<xl-param><span slot="l">Lookup_value</span><span slot="i">D2</span><span slot="v">"小莉"</span></xl-param>
<xl-param><span slot="l">Table_array</span><span slot="i">A2:B11</span><span slot="v">{"小琪",90;"小洋",52;"小艺",58;"小思"</span></xl-param>
<xl-param><span slot="l">Col_index_num</span><span slot="i">2</span><span slot="v">2</span></xl-param>
<xl-param><span slot="l">Range_lookup</span><span slot="i">0</span><span slot="v">FALSE</span></xl-param></div>
<div class="ln" style="margin:6px 0 0 352px"><span style="display:inline-block;width:18px">=</span>63</div>
<div class="ln" style="margin-top:5px">搜索表区域首列满足条件的元素，确定待检索单元格在区域中的行序号，再进一步返回选定单元格的值。默认</div>
<div class="ln">情况下，表是以升序排序的</div>
<div class="rg"><div class="a ln">Range_lookup</div><div><div class="ln">逻辑值: 若要在第一列中查找大致匹配，请使用 TRUE 或省略；若要查</div><div class="ln">找精确匹配，请使用 FALSE</div></div></div>
<div class="hr"></div>
<div class="ln" style="margin-top:14px">计算结果 =<span style="margin-left:12px">63</span></div>
<div class="bt"><a>有关该函数的帮助(H)</a><xl-btn def style="margin-right:11px">确定</xl-btn><xl-btn>取消</xl-btn></div></div>`);

define('xl-mark',`:host{position:absolute;left:0;top:0;width:1916px;height:817px;pointer-events:none;overflow:hidden;display:block}
.rect{position:absolute;left:937.500px;top:650px;width:104px;height:59px;box-sizing:border-box;border:7.500px solid #f53a3a}
svg{position:absolute;left:0;top:0}
.t{position:absolute;color:rgba(255,255,255,.72);-webkit-text-stroke:1px #d2d2d2;white-space:nowrap}
.b{left:1472px;top:659px;font:700 84px/64px "Liberation Sans";letter-spacing:-3px}
.p{position:absolute;left:1593px;top:612px;width:90px;height:112px}
.du{left:1608px;top:676px;font:700 44px/38px "Liberation Sans";letter-spacing:-1px}
.jx{left:1690px;top:663px;font:700 56px/56px ${CJK};letter-spacing:2px}
.u{left:1471px;top:728px;font:300 48px/38px Lato,sans-serif;letter-spacing:.3px;-webkit-text-stroke:1px #d4d4d4}`,
`<svg width="1916" height="817"><polygon points="1057,644 1067,623 1074,631 1126,597 1081,635 1083,640" fill="#f03a3a"/></svg>
<div class="rect"></div>
<span class="t b">Bai</span><div class="p">${ICON.paw}</div><span class="t du">du</span><span class="t jx">经验</span>
<div class="t u">jingyan.baidu.com</div>`);

define('xl-app',`:host{display:flex;flex-direction:column;width:1916px;height:817px;overflow:hidden;position:relative}`,
`<xl-title></xl-title><xl-tabs></xl-tabs><xl-ribbon></xl-ribbon><xl-formula></xl-formula><xl-sheet></xl-sheet><xl-dialog></xl-dialog><xl-mark></xl-mark>`);
</script></body></html>
